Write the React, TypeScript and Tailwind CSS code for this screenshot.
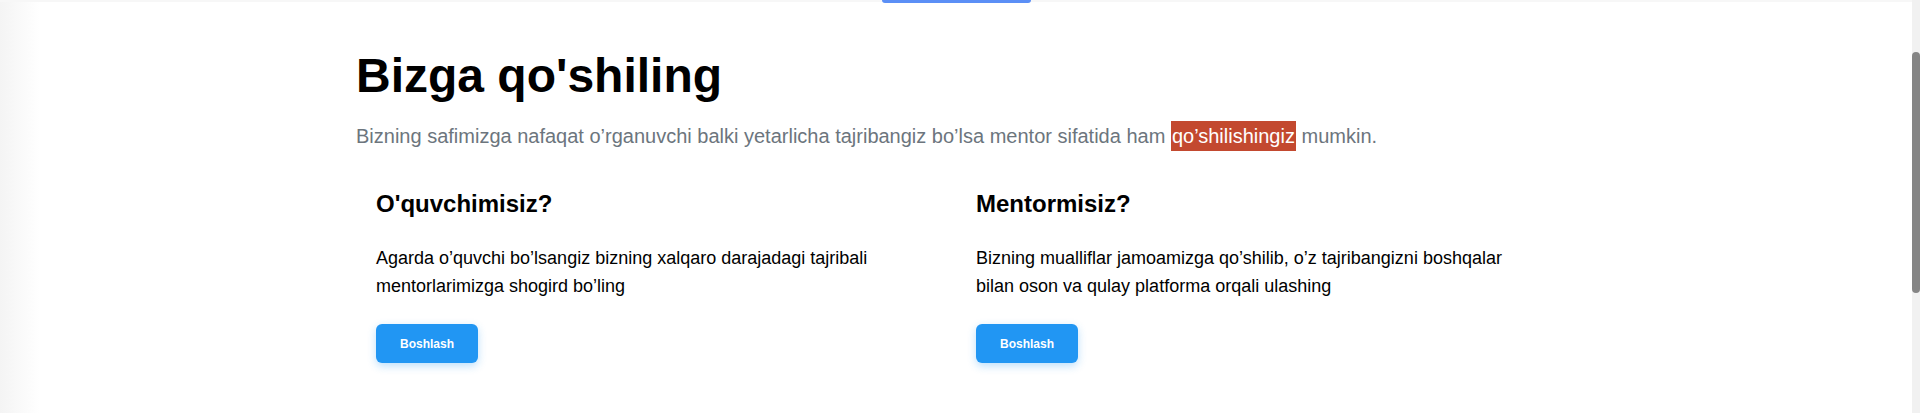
const cards = [
  {
    title: "O'quvchimisiz?",
    text: 'Agarda o’quvchi bo’lsangiz bizning xalqaro darajadagi tajribali mentorlarimizga shogird bo’ling',
  },
  {
    title: 'Mentormisiz?',
    text: 'Bizning mualliflar jamoamizga qo’shilib, o’z tajribangizni boshqalar bilan oson va qulay platforma orqali ulashing',
  },
];

export default function App() {
  return (
    <div className="flex h-[413px] w-full overflow-hidden bg-white font-['Liberation_Sans',Arial,sans-serif] text-black">
      <div className="flex min-w-0 flex-1">
        {/* soft shade on the left edge */}
        <div className="w-10 shrink-0 bg-gradient-to-r from-[#f4f4f4] to-white" />

        <div className="-ml-10 flex min-w-0 flex-1 flex-col">
          <div className="flex h-[2px] justify-center bg-[#f7f7f7]">
            <div className="h-[3px] w-[149px] rounded-b-full bg-[#5b8ff6]" />
          </div>

          <section className="flex justify-center">
            <div className="w-[1200px]">
              <h1 className="mt-[45px] text-[48px] font-bold leading-[1.2]">Bizga qo'shiling</h1>
              <p className="mt-[16px] text-[20px] leading-[30px] text-[#6c757d]">
                Bizning safimizga nafaqat o’rganuvchi balki yetarlicha tajribangiz bo’lsa mentor sifatida ham{' '}
                <mark className="bg-[#c3492f] px-[1px] py-[4px] text-white">qo’shilishingiz</mark> mumkin.
              </p>

              <div className="mt-[39px] grid grid-cols-2">
                {cards.map((card) => (
                  <div key={card.title} className="px-5">
                    <h3 className="text-[24px] font-bold leading-[1.2]">{card.title}</h3>
                    <p className="mt-[26px] text-[18px] leading-[28px]">{card.text}</p>
                    <button className="mt-[24px] h-[39px] rounded-md bg-[#2196f3] px-6 text-[12px] font-bold text-white shadow-[0_3px_8px_rgba(33,150,243,0.3)]">
                      Boshlash
                    </button>
                  </div>
                ))}
              </div>
            </div>
          </section>
        </div>
      </div>

      {/* scrollbar */}
      <div className="w-2 shrink-0 bg-[#f1f1f1] pt-[52px]">
        <div className="h-[241px] w-2 rounded-full bg-[#858585]" />
      </div>
    </div>
  );
}
